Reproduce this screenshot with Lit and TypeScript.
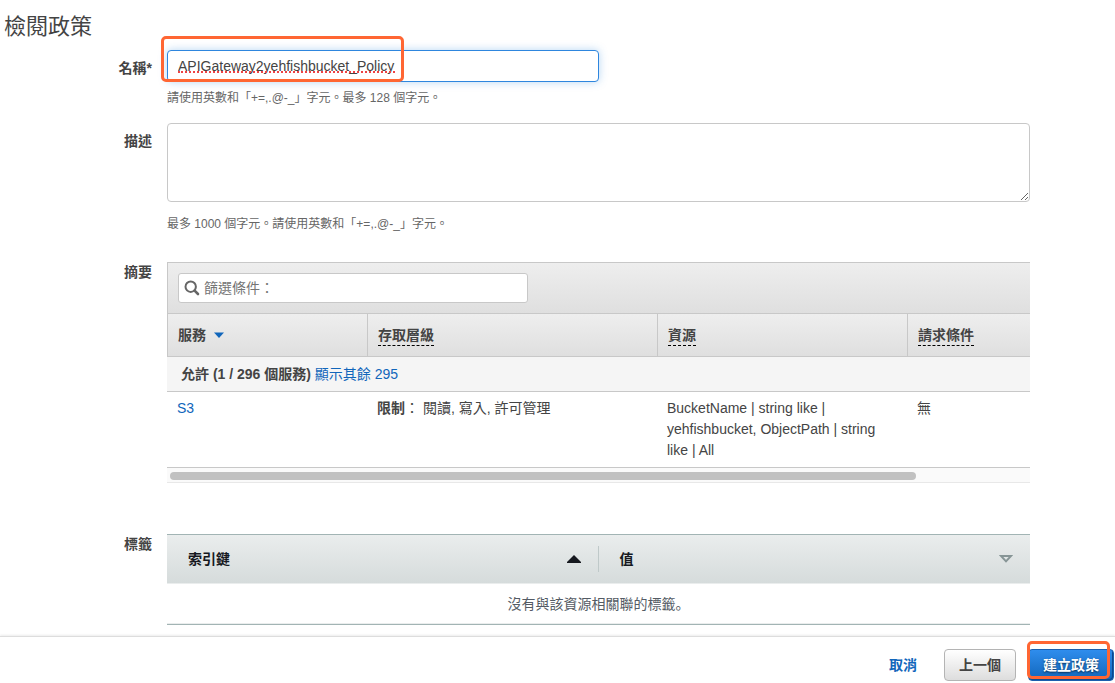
import { LitElement, html, css } from "lit";
import { customElement, state } from "lit/decorators.js";

interface PolicyRow {
  service: string;
  access: string;
  resource: string;
  condition: string;
}

@customElement("policy-summary")
class PolicySummary extends LitElement {
  static styles = css`
    :host {
      display: block;
      min-width: 0;
    }
    * {
      box-sizing: border-box;
    }
    .filter {
      padding: 10px;
      border: solid #c8c8c8;
      border-width: 1px 0 0 1px;
      background: linear-gradient(#eeeeee, #dfdfdf);
    }
    .search {
      display: flex;
      align-items: center;
      gap: 4px;
      width: 350px;
      max-width: 100%;
      height: 30px;
      padding: 0 5px;
      border: 1px solid #c8c8c8;
      border-radius: 3px;
      background: #fff;
    }
    .search svg {
      flex: none;
      display: block;
    }
    .search input {
      flex: 1;
      min-width: 0;
      height: 26px;
      padding: 0;
      border: 0;
      outline: 0;
      background: none;
      font: inherit;
      color: #444;
    }
    .search input::placeholder {
      color: #757575;
      opacity: 1;
    }
    .scroller {
      overflow: hidden;
    }
    table {
      width: 990px;
      table-layout: fixed;
      border-collapse: separate;
      border-spacing: 0;
    }
    .c1 { width: 200px; }
    .c2 { width: 290px; }
    .c3 { width: 250px; }
    th, td {
      text-align: left;
      vertical-align: top;
      font-weight: normal;
    }
    thead th {
      height: 44px;
      padding: 0 10px;
      vertical-align: middle;
      font-weight: bold;
      border: solid #c8c8c8;
      border-width: 1px 0 1px 1px;
      background: linear-gradient(#eeeeee, #dfdfdf);
    }
    .sort {
      display: inline-flex;
      align-items: center;
      gap: 8px;
      padding: 0;
      border: 0;
      background: none;
      font: inherit;
      color: inherit;
    }
    .term {
      display: inline-block;
      line-height: 20px;
      border-bottom: 1px dashed #000;
    }
    .group th {
      height: 35px;
      padding: 0 14px;
      vertical-align: middle;
      background: #f5f5f5;
      border-bottom: 1px solid #c8c8c8;
    }
    tbody td {
      padding: 6px 10px;
      line-height: 21px;
      border-bottom: 1px solid #c8c8c8;
    }
    a {
      color: #1166bb;
      text-decoration: none;
    }
    .track {
      padding: 4px 3px 2px;
      height: 15px;
      background: #fafafa;
      border-bottom: 1px solid #e8e8e8;
    }
    .thumb {
      width: 87%;
      height: 8px;
      border-radius: 4px;
      background: #c1c1c1;
    }
  `;

  @state() rows: PolicyRow[] = [
    {
      service: "S3",
      access: "閱讀, 寫入, 許可管理",
      resource: "BucketName | string like | yehfishbucket, ObjectPath | string like | All",
      condition: "無",
    },
  ];

  render() {
    return html`
      <div class="filter">
        <div class="search">
          <svg width="16" height="16" viewBox="0 0 16 16" fill="none" stroke="#666" aria-hidden="true">
            <circle cx="6.7" cy="6.7" r="5.2" stroke-width="2"></circle>
            <path d="M10.6 10.6 L14 14" stroke-width="2.6" stroke-linecap="round"></path>
          </svg>
          <input type="text" aria-label="篩選條件" placeholder="篩選條件：" />
        </div>
      </div>
      <div class="scroller">
        <table>
          <colgroup><col class="c1" /><col class="c2" /><col class="c3" /><col /></colgroup>
          <thead>
            <tr>
              <th>
                <button class="sort" type="button">
                  服務
                  <svg width="10" height="6" viewBox="0 0 10 6" fill="#1166bb" aria-hidden="true">
                    <path d="M0 0.5 H10 L5 6 Z"></path>
                  </svg>
                </button>
              </th>
              <th><span class="term">存取層級</span></th>
              <th><span class="term">資源</span></th>
              <th><span class="term">請求條件</span></th>
            </tr>
          </thead>
          <tbody>
            <tr class="group">
              <th colspan="4"><b>允許 (1 / 296 個服務)</b> <a href="#all">顯示其餘 295</a></th>
            </tr>
            ${this.rows.map(
              (r) => html`<tr>
                <td><a href="#service">${r.service}</a></td>
                <td><b>限制</b>： ${r.access}</td>
                <td>${r.resource}</td>
                <td>${r.condition}</td>
              </tr>`
            )}
          </tbody>
        </table>
      </div>
      <div class="track"><div class="thumb"></div></div>
    `;
  }
}

@customElement("tag-table")
class TagTable extends LitElement {
  static styles = css`
    :host {
      display: block;
      min-width: 0;
      font-family: "Liberation Sans", "Noto Sans CJK SC", sans-serif;
    }
    * {
      box-sizing: border-box;
    }
    table {
      width: 100%;
      table-layout: fixed;
      border-collapse: separate;
      border-spacing: 0;
      border-top: 1px solid #a2b4b4;
      border-bottom: 1px solid #a2b4b4;
    }
    thead {
      background: linear-gradient(#eaeded, #d5dbdb);
    }
    th {
      height: 49px;
      padding: 0;
      color: #16191f;
      border-bottom: 1px solid #eaeded;
    }
    .head {
      display: flex;
      align-items: center;
      justify-content: space-between;
      width: 100%;
      height: 26px;
      padding: 0 17px 0 21px;
      border: 0;
      background: none;
      font: inherit;
      color: inherit;
    }
    .divided {
      border-right: 1px solid #bfc9c9;
    }
    td {
      height: 40px;
      padding: 0 20px;
      text-align: center;
      color: #545b64;
      border-bottom: 1px solid #eaeded;
    }
  `;

  render() {
    return html`
      <table>
        <thead>
          <tr>
            <th>
              <button class="head divided" type="button">
                索引鍵
                <svg width="14" height="8" viewBox="0 0 14 8" fill="#16191f" aria-hidden="true">
                  <path d="M0 8 V7 L7 0 L14 7 V8 Z"></path>
                </svg>
              </button>
            </th>
            <th>
              <button class="head" type="button">
                值
                <svg width="14" height="8" viewBox="0 0 14 8" fill="none" stroke="#879596" stroke-width="2" aria-hidden="true">
                  <path d="M2 1 H12 L7 6.4 Z"></path>
                </svg>
              </button>
            </th>
          </tr>
        </thead>
        <tbody>
          <tr><td colspan="2">沒有與該資源相關聯的標籤。</td></tr>
        </tbody>
      </table>
    `;
  }
}

@customElement("app-root")
class AppRoot extends LitElement {
  static styles = css`
    :host {
      display: flex;
      flex-direction: column;
      min-height: 100vh;
      font: 14px/20px "Liberation Sans", "Noto Sans CJK TC", sans-serif;
      color: #444;
      background: #fff;
    }
    * {
      box-sizing: border-box;
    }
    main {
      padding: 12px 85px 10px 0;
    }
    h1 {
      margin: 0 0 8px;
      padding-left: 4px;
      font-size: 22px;
      line-height: 30px;
      font-weight: normal;
    }
    .row {
      display: grid;
      grid-template-columns: 152px minmax(0, 1fr);
      column-gap: 15px;
    }
    .row + .row { margin-top: 16px; }
    .row + .summary { margin-top: 29px; }
    .row + .tags { margin-top: 51px; }
    .label {
      padding-top: 8px;
      text-align: right;
      font-weight: bold;
    }
    .summary .label,
    .tags .label {
      padding-top: 0;
    }
    .name {
      position: relative;
      width: 50%;
    }
    .name input {
      display: block;
      width: 100%;
      height: 32px;
      padding: 0 10px;
      border: 1px solid #2e86de;
      border-radius: 4px;
      outline: 0;
      background: #fff;
      box-shadow: 0 0 8px rgba(46, 134, 222, 0.35);
      font: inherit;
      color: inherit;
    }
    .misspelt {
      position: absolute;
      top: 21px;
      left: 11px;
      width: 217px;
      border-bottom: 2px dotted #ee4444;
      pointer-events: none;
    }
    textarea {
      display: block;
      width: 100%;
      height: 79px;
      padding: 6px 10px;
      border: 1px solid #c8c8c8;
      border-radius: 4px;
      outline: 0;
      background: #fff;
      font: inherit;
      color: inherit;
      resize: both;
    }
    .hint {
      margin: 7px 0 0;
      font-size: 12px;
      line-height: 18px;
      color: #666;
    }
    .low {
      margin-top: 13px;
    }
    .mark {
      position: absolute;
      border: 3px solid #ff6633;
      border-radius: 5px;
      pointer-events: none;
    }
    .mark-name {
      top: -14px;
      left: -6px;
      width: 243px;
      height: 46px;
    }
    .mark-create {
      top: -8px;
      right: 4px;
      bottom: 2px;
      left: -1px;
    }
    footer {
      display: flex;
      align-items: center;
      justify-content: flex-end;
      gap: 12px;
      margin-top: auto;
      padding: 12px 1px 2px 12px;
      border-top: 1px solid #ddd;
      box-shadow: 0 -1px 2px rgba(0, 0, 0, 0.08);
    }
    .cancel {
      margin-right: 15px;
      color: #1166bb;
      font-weight: bold;
      text-decoration: none;
    }
    .btn {
      display: block;
      height: 32px;
      padding: 0 14px;
      border: 1px solid #b4b4b4;
      border-radius: 4px;
      background: linear-gradient(#ffffff, #dddddd);
      font: inherit;
      font-weight: bold;
      color: #444;
    }
    .primary {
      border-color: #1a5fae;
      background: linear-gradient(#2f8ded, #1166bb);
      box-shadow: inset -1px -1px 0 #0c4a8c;
      color: #fff;
      text-shadow: 0 1px 2px rgba(0, 0, 0, 0.6);
    }
    .create {
      position: relative;
    }
  `;

  @state() name = "APIGateway2yehfishbucket_Policy";

  render() {
    return html`
      <main>
        <h1>檢閱政策</h1>
        <div class="row">
          <label class="label" for="name">名稱*</label>
          <div>
            <div class="name">
              <input id="name" type="text" spellcheck="false" .value=${this.name} />
              <span class="misspelt"></span>
              <span class="mark mark-name"></span>
            </div>
            <p class="hint">請使用英數和「+=,.@-_」字元。最多 128 個字元。</p>
          </div>
        </div>
        <div class="row">
          <label class="label" for="description">描述</label>
          <div>
            <textarea id="description"></textarea>
            <p class="hint low">最多 1000 個字元。請使用英數和「+=,.@-_」字元。</p>
          </div>
        </div>
        <div class="row summary">
          <div class="label">摘要</div>
          <policy-summary></policy-summary>
        </div>
        <div class="row tags">
          <div class="label">標籤</div>
          <tag-table></tag-table>
        </div>
      </main>
      <footer>
        <a class="cancel" href="#cancel">取消</a>
        <button class="btn" type="button">上一個</button>
        <div class="create">
          <button class="btn primary" type="button">建立政策</button>
          <span class="mark mark-create"></span>
        </div>
      </footer>
    `;
  }
}
